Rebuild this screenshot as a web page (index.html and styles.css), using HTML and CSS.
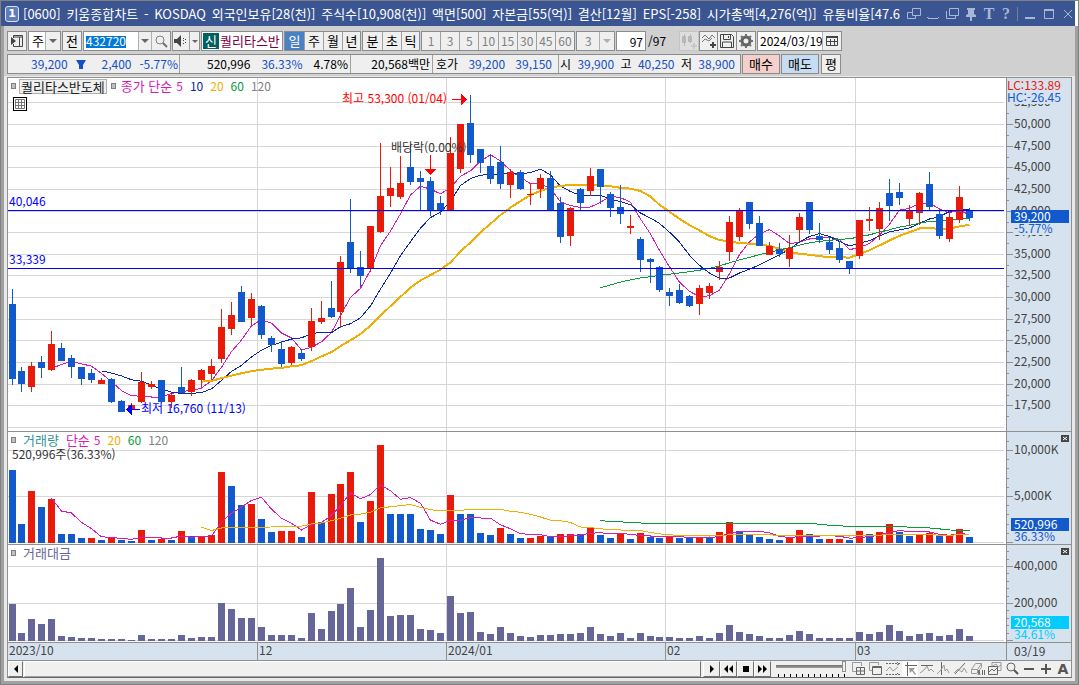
FILE: index.html
```html
<!DOCTYPE html>
<html lang="ko">
<head>
<meta charset="utf-8">
<title>[0600] 키움종합차트</title>
<link rel="stylesheet" href="styles.css">
</head>
<body>
<div class="window">
  <header class="titlebar">
    <span class="badge">1</span>
    <h1 class="title">
      <span>[0600]</span><span>키움종합차트</span><span>-</span><span>KOSDAQ</span><span>외국인보유[28(천)]</span><span>주식수[10,908(천)]</span><span>액면[500]</span><span>자본금[55(억)]</span><span>결산[12월]</span><span>EPS[-258]</span><span>시가총액[4,276(억)]</span><span>유통비율[47.6</span>
    </h1>
    <div class="winbtns">
      <button aria-label="창 복제"><svg width="14" height="14"><path d="M5.500 1.500h8v7h-8zM5.500 5.500h-5v6h8v-3"/></svg></button>
      <button aria-label="내리기"><svg width="14" height="14"><path d="M1 10.500h1.500M2 11.500h10M12 10.500h1"/></svg></button>
      <button aria-label="겹치기"><svg width="14" height="14"><path d="M4.500 1.500h9v7h-9zM1.500 4v7.500h9V9"/></svg></button>
      <button aria-label="고정"><svg width="14" height="14"><path class="fill" d="M3 1h8v2h-1v4l2 1v2H8v4H6v-4H2V8l2-1V3H3z"/></svg></button>
      <button class="glyph" aria-label="글꼴">T</button>
      <button class="glyph" aria-label="도움말">?</button>
      <i class="winsep"></i>
      <button aria-label="최소화"><svg width="14" height="14"><path class="bold" d="M2 11h10"/></svg></button>
      <button aria-label="최대화"><svg width="14" height="14"><path d="M2.500 3.500h9v8h-9z"/><path class="bold" d="M2 3h10"/></svg></button>
      <button aria-label="닫기"><svg width="14" height="14"><path d="M3 3l8 8M11 3l-8 8"/></svg></button>
    </div>
  </header>

  <div class="body">
    <div class="bars">
      <div class="bar">
        <button class="btn sq" aria-label="패널"><svg width="14" height="14"><path class="ink" d="M3.500 4V1.500h9v11h-9V10M3 3h10M9.500 3v9"/><path class="inkfill" d="M1 3l5 4-5 4z"/></svg></button>
        <select class="sel sel-kind" aria-label="종류"><option>주</option></select>
        <button class="btn sq">전</button>
        <div class="code">
          <input class="code-in" aria-label="종목코드" value="432720">
          <button class="arrow" aria-label="목록"></button>
          <button class="find" aria-label="검색"><svg width="14" height="14"><circle class="gray1" cx="6" cy="6" r="4"/><path class="gray2" d="M9 9l4 4"/></svg></button>
        </div>
        <div class="group sound">
          <button aria-label="소리"><svg width="16" height="14"><path class="inkfill" d="M1 5h3l4-4v12L4 9H1z"/><path class="ink" d="M10.500 4v1M10.500 6v1M10.500 9v1M12.500 5v1M12.500 8v1"/></svg></button>
          <button class="arrow" aria-label="소리 목록"></button>
        </div>
        <div class="stock"><b>신</b><span>퀄리타스반</span></div>
        <div class="group days"><button class="on">일</button><button>주</button><button>월</button><button>년</button></div>
        <div class="group days"><button>분</button><button>초</button><button>틱</button></div>
        <div class="group mins"><button>1</button><button>3</button><button>5</button><button>10</button><button>15</button><button>30</button><button>45</button><button>60</button></div>
        <select class="sel sel-off" aria-label="분 간격"><option>3</option></select>
        <div class="count"><input aria-label="봉 개수" value="97"><span>/97</span></div>
        <div class="tools">
          <button class="flat" aria-label="봉 추가"><svg width="18" height="18"><path class="paleFill" d="M2 4h4v7H2zM8 4h4v6H8z"/><path class="pale" d="M4.500 2v12M10.500 2v9M11 14h6M14 11v6"/></svg></button>
          <button class="btn sq" aria-label="지표 추가"><svg width="16" height="16"><path class="ink thin" d="M1 5l3-3 4 4 3-4 3 3M1 9l3-3 4 2 3-3"/><path class="ink2" d="M9 12h6M12 9v6"/></svg></button>
          <button class="btn sq" aria-label="저장"><svg width="16" height="16"><path class="ink" d="M1.500 1.500h11l2 2v11h-13zM4.500 1.500v5h7v-5M3.500 14v-5h9v5M9.500 3v2"/></svg></button>
          <button class="btn sq" aria-label="설정"><svg width="16" height="16"><circle class="gray3" cx="8" cy="8" r="4"/><path class="gray2" d="M8 1v3M8 12v3M1 8h3M12 8h3M3 3l2 2M11 11l2 2M13 3l-2 2M3 13l2-2"/></svg></button>
        </div>
        <div class="code date">
          <input aria-label="날짜" value="2024/03/19">
          <button class="find" aria-label="달력"><svg width="14" height="14"><path class="ink" d="M1.500 3.500h11v8h-11zM5.500 5v7M9.500 5v7M1 7.500h12"/><path class="ink2" d="M1 3h12"/></svg></button>
        </div>
      </div>
      <div class="bar">
        <div class="quote">
          <div class="cell c1"><span>39,200</span><svg width="10" height="9"><path d="M0 0h10L7 5v4H3V5z"/></svg><span class="n2">2,400</span><span>-5.77%</span></div>
          <div class="cell c2"><span class="k">520,996</span><span>36.33%</span><span class="k">4.78%</span></div>
          <div class="cell c3"><span class="k">20,568백만</span></div>
          <div class="cell c4"><span class="k">호가</span><span>39,200</span><span>39,150</span></div>
          <div class="cell c5"><span class="k">시</span><span>39,900</span><span class="k">고</span><span>40,250</span><span class="k">저</span><span>38,900</span></div>
        </div>
        <button class="btn buy">매수</button>
        <button class="btn sell">매도</button>
        <button class="btn avg">평</button>
      </div>
    </div>

    <main class="panel">
      <section class="pane">
        <svg class="plot price" id="price"></svg>
        <svg class="axis price" id="priceAxis"></svg>
        <div class="legend">
          <i></i><button class="name">퀄리타스반도체</button><i></i>
          <span class="m5 ko">종가 단순</span><span class="m5">5</span><span class="m10">10</span><span class="m20">20</span><span class="m60">60</span><span class="m120">120</span>
        </div>
        <button class="gridbtn" aria-label="표 보기"><svg width="10" height="10"><path d="M.5.5h9v9h-9zM0 3.500h10M0 6.500h10M3.500 0v10M6.500 0v10"/></svg></button>
      </section>
      <section class="pane">
        <svg class="plot vol" id="vol"></svg>
        <svg class="axis vol" id="volAxis"></svg>
        <div class="legend">
          <i></i><span class="teal ko">거래량</span><span class="m5 ko">단순</span><span class="m5">5</span><span class="m20">20</span><span class="m60">60</span><span class="m120">120</span>
        </div>
        <p class="note">520,996주(36.33%)</p>
        <button class="close" aria-label="닫기"><svg width="8" height="7"><path d="M2 2l4 3M6 2l-4 3"/></svg></button>
      </section>
      <section class="pane">
        <svg class="plot amt" id="amt"></svg>
        <svg class="axis amt" id="amtAxis"></svg>
        <div class="legend"><i></i><span class="violet ko">거래대금</span></div>
        <button class="close" aria-label="닫기"><svg width="8" height="7"><path d="M2 2l4 3M6 2l-4 3"/></svg></button>
      </section>
      <section class="pane time">
        <svg class="plot" id="time"></svg>
        <span class="axis last">03/19</span>
      </section>
      <footer class="nav">
        <button class="raised" aria-label="이전"><svg width="6" height="8"><path d="M5 0v8L1 4z"/></svg></button>
        <div class="track"></div>
        <div class="play">
          <button class="raised" aria-label="재생"><svg width="8" height="8"><path d="M2 0v8l4-4z"/></svg></button>
          <button class="raised" aria-label="뒤로"><svg width="9" height="8"><path d="M4 0v8L0 4zM9 0v8L5 4z"/></svg></button>
          <button class="raised" aria-label="정지"><svg width="6" height="8"><path d="M0 1h6v6H0z"/></svg></button>
          <button class="raised" aria-label="앞으로"><svg width="9" height="8"><path d="M0 0v8l4-4zM5 0v8l4-4z"/></svg></button>
        </div>
        <input class="speed" type="range" min="0" max="11" value="11" aria-label="속도">
        <div class="icons">
          <button aria-label="새 창"><svg width="16" height="16"><path class="g" d="M5 10.500H1.500v-9h9V5"/><path class="d" d="M5.500 6.500h8v7h-8zM5 10h9M9.500 6v8"/></svg></button>
          <button aria-label="창 복사"><svg width="16" height="16"><path class="g" d="M5 9.500H1.500v-8h9V4"/><path class="d" d="M4.500 5.500h9v8h-9zM4 6.500h10"/></svg></button>
          <button aria-label="범위"><svg width="16" height="16"><path class="d dash" d="M1 2.500h14M1 13.500h14"/><path class="g" d="M1 10l4-4 3 4 5-4"/><path class="d" d="M12 1l2 2-2 1M12 12l2 2"/></svg></button>
          <button class="on" aria-label="십자선"><svg width="16" height="16"><path class="d" d="M3 4.500h12M5.500 1v14"/><path class="f" d="M7 7h6l-2 2 3 4-1 1-3-4-2 2z"/></svg></button>
          <button aria-label="수평선"><svg width="16" height="16"><path class="d" d="M2 4.500h12"/><path class="g" d="M1 12l4-3 3-4 2 5 2-2 3 3"/></svg></button>
          <button aria-label="수직선"><svg width="16" height="16"><path class="d" d="M5.500 1v13"/><path class="g" d="M1 13l4-4 3-5 1 6 2-2 2 4"/></svg></button>
          <button aria-label="추세선"><svg width="16" height="16"><path class="d" d="M2 13L12 2"/><path class="g" d="M1 12l4-4 4 3 2-4 3 5"/></svg></button>
          <button aria-label="지우개"><svg width="16" height="16"><path class="g" d="M1.500 8.500l4-6h6l-4 6zM1.500 8.500v4h5l5-6v-4M7.500 8.500v3"/><path class="d" d="M8 14l1-5 1 5M12.500 9v5M14.500 9v5"/></svg></button>
          <button aria-label="그림 저장"><svg width="16" height="16"><path class="g" d="M5 5V1.500h9v8h-3M6 5l3-2 2 3 3-2"/><path class="d" d="M1.500 5.500h9v8h-9zM2 11l3-3 2 2 3-3"/></svg></button>
          <button aria-label="돋보기"><svg width="16" height="16"><circle class="d" cx="7" cy="6" r="4"/><path class="t" d="M10 9l4 4"/></svg></button>
          <button aria-label="축소"><svg width="16" height="16"><path class="t" d="M3 8h10"/></svg></button>
          <button aria-label="확대"><svg width="16" height="16"><path class="t" d="M3 8h10M8 3v10"/></svg></button>
          <button class="letter" aria-label="자동">A</button>
        </div>
      </footer>
    </main>
  </div>
</div>
<script src="chart.js"></script>
</body>
</html>
```
FILE: styles.css
```css
* { box-sizing: border-box; }
body, h1, p { margin: 0; }
body, button, input, select {
  font-family: "Noto Sans CJK KR", sans-serif;
  font-size: 12px;
  line-height: 16px;
  color: #000;
}
button { padding: 0; border: 0; background: none; }
button svg { display: block; margin: auto; }
svg path, svg circle { fill: none; }

.window {
  min-height: 100vh;
  display: flex;
  flex-direction: column;
  border: 1px solid #808080;
}

.titlebar {
  display: flex;
  align-items: center;
  height: 25px;
  margin-right: 3px;
  padding: 0 0 0 4px;
  background: #3a5591;
  color: #fff;
}
.badge {
  width: 14px;
  height: 16px;
  border: 1px solid #dbe3f3;
  border-radius: 3px;
  background: #5f7db8;
  font: bold 11px/14px "DejaVu Sans", sans-serif;
  text-align: center;
}
.title {
  flex: 1;
  display: flex;
  justify-content: space-between;
  padding: 0 7px 0 4px;
  font-size: 13px;
  font-weight: 400;
  line-height: 20px;
  white-space: nowrap;
}
.winbtns { display: flex; align-items: center; gap: 5px; }
.winbtns button { width: 14px; height: 14px; }
.winbtns path { stroke: #a9b7d6; }
.winbtns .fill { fill: #a9b7d6; stroke: none; }
.winbtns .bold { stroke-width: 2; }
.winbtns .glyph { width: 12px; font: bold 16px/14px "Liberation Serif", serif; color: #a9b7d6; }
.winsep { width: 1px; height: 14px; background: #7c7c8c; }

.body {
  flex: 1;
  border: 3px solid #a0a0a0;
  border-top: 0;
  background: #e8e8e8;
}
.bars {
  display: flex;
  flex-direction: column;
  gap: 3px;
  padding: 5px 3px 2px;
  background: #d0d0d0;
}
.bar { display: flex; gap: 1px; height: 20px; }

.btn, .group, .code, .stock, .sel, .count input {
  border: 1px solid #8c8c8c;
  background: #efefef;
}
.sq { width: 20px; font-size: 13px; }
.sel {
  appearance: none;
  padding: 0 0 0 3px;
  border-radius: 0;
  font-size: 13px;
  background: #fff url("data:image/svg+xml,%3Csvg xmlns='http://www.w3.org/2000/svg' width='15' height='18'%3E%3Cpath d='M0 0h15v18H0z' fill='%23efefef'/%3E%3Cpath d='M0 0h1v18H0z' fill='%23b0b0b0'/%3E%3Cpath d='M4 7h8l-4 4z' fill='%23666'/%3E%3C/svg%3E") right center no-repeat;
}
.sel-kind { width: 33px; }
.sel-off {
  width: 39px;
  padding-left: 8px;
  font-size: 12px;
  color: #808080;
  background-color: #efefef;
  background-image: url("data:image/svg+xml,%3Csvg xmlns='http://www.w3.org/2000/svg' width='15' height='18'%3E%3Cpath d='M0 0h15v18H0z' fill='%23efefef'/%3E%3Cpath d='M0 0h1v18H0z' fill='%23b0b0b0'/%3E%3Cpath d='M4 7h8l-4 4z' fill='%23b0b0b0'/%3E%3C/svg%3E");
}
.code { display: flex; background: #fff; }
.code input {
  width: 54px;
  padding: 0 0 0 2px;
  border: 0;
  background: none;
}
.code .code-in {
  color: #fff;
  background: linear-gradient(#0078d7, #0078d7) 2px 4px / 40px 12px no-repeat;
}
.arrow { width: 13px; background: #efefef; border-left: 1px solid #b0b0b0; }
.arrow::before {
  content: "";
  display: block;
  width: 0;
  margin: auto;
  border: 4px solid transparent;
  border-top-color: #666;
  border-bottom: 0;
}
.find { border-left: 1px solid #b0b0b0; background: #efefef; }
.code .find { width: 19px; }
.group { display: flex; }
.group button { flex: 1; font-size: 13px; }
.group button + button { border-left: 1px solid #a0a0a0; }
.sound { width: 28px; }
.sound button:first-child { flex: 0 0 16px; }
.sound .arrow { flex: 0 0 10px; }
.sound .arrow::before { border-width: 3px; border-bottom: 0; }
.stock {
  display: flex;
  align-items: center;
  width: 82px;
  padding: 1px;
  overflow: hidden;
  background: #fff;
  font-size: 13px;
  white-space: nowrap;
  color: #800040;
}
.stock b {
  flex: 0 0 16px;
  margin-right: 1px;
  background: #006060;
  color: #fff;
  font-weight: 400;
  text-align: center;
}
.days button { flex: 0 0 19px; }
.days button:last-child { flex-basis: 18px; }
.days .on { background: #4a80c4; color: #fff; }
.mins { width: 154px; }
.mins button { font-size: 12px; color: #808080; }
.count { display: flex; align-items: center; gap: 2px; }
.count input { width: 30px; height: 20px; padding: 0 2px; text-align: right; background: #fff; }
.tools { display: flex; margin-left: auto; }
.tools .sq { width: 19px; }
.flat { width: 20px; background: #dedede; border: 1px solid #c4c4c4; }
.tools button + button { border-left-width: 0; }
.tools .flat + button { border-left-width: 1px; }
.date { width: 85px; margin-right: 230px; }
.date input { width: 64px; }
.ink, .ink2, .gray1, .gray2, .gray3 { stroke: #444; }
.ink2 { stroke-width: 2; }
.thin { stroke: #777; }
.gray1 { stroke: #808080; }
.gray2 { stroke: #707070; stroke-width: 2; }
.gray3 { stroke: #606060; stroke-width: 3; }
.pale { stroke: #b8b8b8; }
svg .inkfill { fill: #444; }
svg .paleFill { fill: #b8b8b8; }

.quote {
  display: flex;
  border: 1px solid #8c8c8c;
  background: #efefef;
  color: #1450c8;
}
.cell { display: flex; align-items: center; justify-content: space-between; white-space: nowrap; }
.cell + .cell { border-left: 1px solid #a0a0a0; }
.k { color: #000; }
.c1 { width: 171px; padding: 0 1px 0 23px; }
.c1 path { fill: #1450c8; }
.c1 .n2 { margin-left: 8px; }
.c2 { width: 171px; padding: 0 2px 0 27px; }
.c3 { width: 82px; padding: 0 2px; justify-content: flex-end; }
.c4 { width: 126px; padding: 0 6px 0 3px; }
.c5 { width: 182px; padding: 0 5px 0 1px; }
.buy, .sell { width: 38px; font-size: 13px; }
.buy { background: #f5cfca; }
.sell { background: #c6dcf3; }
.avg { width: 20px; margin-left: 1px; font-size: 13px; }

.panel { margin: 1px 3px 0; border: 1px solid #909090; border-bottom-color: #686868; }
.pane {
  position: relative;
  display: flex;
  border-bottom: 1px solid #909090;
  background: #fff;
}
.plot { flex: 1; min-width: 0; display: block; }
.axis { flex: 0 0 65px; width: 65px; min-width: 0; border-left: 1px solid #909090; background: #d7e2ef; display: block; }
.price { height: 353px; }
.vol { height: 112px; }
.amt { height: 97px; }
.plot, .axis { shape-rendering: crispEdges; overflow: hidden; }
.time .plot, .price.axis { overflow: visible; }
.plot text, .axis text { font-size: 12px; }
.time .plot, .time .axis { height: 17px; background: #d7e2ef; }
.last { padding-left: 7px; color: #444; line-height: 16px; }

.legend {
  position: absolute;
  top: 0;
  left: 3px;
  display: flex;
  align-items: center;
  gap: 7px;
  height: 16px;
  white-space: nowrap;
}
.legend i { width: 5px; height: 6px; border: 1px solid #808080; background: #c0c0c0; }
.legend .name {
  height: 15px;
  margin: 0 -3px 0 -4px;
  padding: 0 1px;
  border: 1px solid #b0b0b0;
  background: #efefef;
  font-size: 13px;
  line-height: 13px;
  color: #222;
}
.legend .ko { font-size: 13px; }
.legend i + .ko.m5 { margin-left: -2px; }
.m5 { color: #d61cb4; }
.ko + .m5:not(.ko) { margin-left: -3px; }
.m10 { color: #0a28a8; }
.m20 { color: #f0ae00; }
.m60 { color: #0a9a3c; }
.m120 { color: #808080; }
.teal { color: #2e9494; }
.violet { color: #666699; }
.gridbtn {
  position: absolute;
  top: 19px;
  left: 5px;
  width: 14px;
  height: 14px;
  border: 1px solid #000;
  background: #fff;
}
.gridbtn path { stroke: #777; }
.note { position: absolute; top: 14px; left: 4px; color: #333; }
.close { position: absolute; top: 3px; right: 2px; width: 8px; height: 7px; background: #444; }
.close path { stroke: #fff; }

.nav { display: flex; height: 16px; background: #f0f0f0; }
.raised {
  width: 15px;
  height: 16px;
  border: 1px solid #fff;
  border-right-color: #707070;
  border-bottom-color: #707070;
  background: #efefef;
}
.raised path { fill: #000; }
.track { flex: 1; margin: 0 2px 0 1px; border: 1px solid #fff; border-right-color: #707070; border-bottom-color: #a0a0a0; }
.play { display: flex; }
.play .raised { width: 17px; }
.speed {
  appearance: none;
  width: 70px;
  height: 16px;
  margin: 0 5px;
  background:
    linear-gradient(#707070, #a0a0a0) 0 4px / 100% 3px no-repeat,
    repeating-linear-gradient(90deg, #000 0 1px, transparent 1px 6px) 2px 13px / 67px 3px no-repeat;
}
.speed::-webkit-slider-thumb {
  appearance: none;
  width: 4px;
  height: 11px;
  margin-top: -5px;
  border: 1px solid #909090;
  background: #efefef;
}
.icons { display: flex; gap: 1px; }
.icons button { width: 16px; height: 16px; }
.icons .on { background: #fff; }
.icons .g { stroke: #9a9a9a; }
.icons .d { stroke: #666; }
.icons .t { stroke: #555; stroke-width: 2; }
.icons .f { fill: #999; }
.icons .dash { stroke-dasharray: 2 1; }
.icons .letter { font: bold 14px/16px "DejaVu Sans", sans-serif; color: #555; }
```
FILE: chart.js
```js
const RED = '#e81a0a', BLUE = '#125acb', GRID = '#d6d6d6', TICK = '#909090';
const PITCH = 319 / 32;
const MONTHS = [[249, '12'], [438, '2024/01'], [657, '02'], [847, '03']];

// direction, high, body top, body bottom, low
const candles = `B289 304 379 385,B367 371 384 392,R362 366 387 392,B356 362 368 378,R331 344 370 371,
B343 348 361 361,B355 358 367 378,B367 367 379 385,B369 373 380 383,R378 380 384 384,
B378 379 402 403,B400 401 412 412,R403 405 409 409,R372 382 402 403,R381 384 387 389,
B380 380 402 403,R393 395 402 408,B367 387 393 393,R379 380 392 396,R369 370 380 387,
R359 366 374 380,R309 327 359 363,R302 315 329 335,B286 292 322 322,R293 299 318 326,
B305 306 335 339,B336 338 345 352,B341 349 364 367,R346 347 363 365,B349 353 359 361,
R308 321 347 351,R301 318 322 324,B281 308 317 318,R256 262 312 328,B199 242 269 273,
B251 267 276 287,R226 226 269 272,R143 196 232 233,R167 188 196 207,R156 183 197 199,
B145 167 182 185,B171 178 182 210,B177 181 211 216,B196 203 211 215,R137 153 211 211,
R124 124 169 173,B95 123 155 163,B149 149 163 173,B154 166 179 184,B146 162 184 189,
R169 172 185 198,B170 172 189 190,R184 194 195 205,R174 178 189 198,B171 178 211 211,
B197 203 237 243,R207 208 236 246,B188 189 203 210,R168 176 191 196,B169 169 187 204,
B192 194 208 217,B185 207 214 224,R215 226 228 234,B237 239 260 272,B258 259 262 283,
B266 267 290 292,B288 292 296 306,B284 290 303 304,B295 296 306 307,R285 288 304 315,
R283 286 293 299,R261 267 272 280,R216 222 252 261,R208 210 237 241,B202 202 224 229,
B216 223 246 246,R242 246 255 255,B243 249 254 257,R235 248 259 267,R213 217 230 242,
B202 202 230 234,B223 236 240 243,B237 242 250 254,B241 248 260 263,B261 261 268 274,
R220 220 256 259,R207 219 221 231,R202 208 229 240,B179 193 206 221,B183 192 198 205,
R205 211 219 226,R192 193 213 225,B172 184 207 210,B210 214 236 239,R211 217 239 242,
R186 197 220 223,B208 211 218 221`.split(',').map(s => {
  s = s.trim();
  return { up: s[0] === 'R', v: s.slice(1).split(' ').map(n => n - 78) };
});

const volumes = `B73 B19 R52 B36 R44 B9 B9 B5 R5 B3 R6 B3 B2 R13 B3 R4 B3 R12 B7 R6 R8 R71 B57 B38 R39 B24 B11 R12 R12 B6
R51 B21 R49 R59 R71 B21 R42 R98 B29 B29 B29 B14 B13 B9 R48 B29 B29 B10 B8 R15 B9 B5 R5 R7 B6 R9 R9 B9 R16 B8
B5 R10 B4 R10 B6 B5 R6 B5 B5 R6 B5 R11 R21 B12 B8 B6 B4 B3 R6 R13 B9 B4 R4 R4 B3 R12 B9 R11 R19 B11
B7 R8 R10 B7 R7 R14 B6`.split(/\s+/).map(s => ({ up: s[0] === 'R', h: +s.slice(1) }));

const amounts = `37 8 22 17 22 5 4 3 3 2 2 2 1 6 2 2 2 6 3 4 4 38 32 23 23 14 6 6 6 3 28 12 30 37 53 14 31 83 25 26
26 12 11 8 45 28 29 9 7 14 8 5 4 6 6 7 7 8 14 7 5 8 3 8 5 4 4 3 3 5 3 8 16 9 7 5 3 3 6 10
7 3 3 3 3 9 7 9 16 10 5 7 8 5 6 12 5`.split(/\s+/).map(Number);

const left = i => Math.floor(1 + i * PITCH);
const rect = (x, y, w, h, fill) => `<rect x="${x}" y="${y}" width="${w}" height="${h}" fill="${fill}"/>`;
const text = (x, y, s, fill, anchor = 'start') => `<text x="${x}" y="${y}" fill="${fill}" text-anchor="${anchor}">${s}</text>`;
const shape = (d, fill) => `<path d="${d}" style="fill:${fill}"/>`;
const put = (id, html) => { document.getElementById(id).innerHTML = html; };

function average(values, n, color, width = 1) {
  const pts = [];
  for (let i = n - 1; i < values.length; i++) {
    const sum = values.slice(i - n + 1, i + 1).reduce((a, b) => a + b, 0);
    pts.push(`${left(i) + 3.5},${(sum / n).toFixed(1)}`);
  }
  return `<polyline points="${pts.join(' ')}" fill="none" stroke="${color}" stroke-width="${width}"/>`;
}

function grid(rows, height) {
  return rows.map(y => rect(0, y, '99.8%', 1, GRID)).join('') +
    MONTHS.map(m => rect(m[0], 0, 1, height, GRID)).join('');
}

// price
const closes = candles.map(c => c.up ? c.v[1] : c.v[2]);
const priceRows = Array.from({ length: 16 }, (_, k) => Math.round(24.4 + 21.63 * k));
put('price', grid(priceRows, 353) +
  average(closes, 5, '#d61cb4') + average(closes, 10, '#0a28a8') +
  average(closes, 20, '#f0ae00', 2) + average(closes, 60, '#0a9a3c') +
  candles.map((c, i) => {
    const [hi, top, bottom, lo] = c.v, color = c.up ? RED : BLUE;
    return rect(left(i) + 3, hi, 1, lo - hi, color) + rect(left(i), top, 7, bottom - top, color);
  }).join('') +
  rect(0, 132, '99.8%', 1, '#00f') + rect(0, 190, '99.8%', 1, '#00f') +
  text(1, 128, '40,046', '#00f') + text(1, 186, '33,339', '#00f') +
  text(439, 25, '최고 53,300 (01/04)', '#f00', 'end') + rect(444, 21, 10, 1, '#f00') + shape('M453 16v11l6-5.500z', '#f00') +
  text(383, 74, '배당락(0.00%)', '#333') + rect(422, 77, 1, 15, '#f00') + shape('M417 91h11l-5.500 6z', '#f00') +
  text(133, 335, '최저 16,760 (11/13)', '#00f') + rect(122, 331, 10, 1, '#00f') + shape('M124 326v11l-6-5.500z', '#00f'));

const labels = ['52,500', '50,000', '47,500', '45,000', '42,500', '40,000', '37,500', '35,000', '32,500', '30,000', '27,500', '25,000', '22,500', '20,000', '17,500'];
put('priceAxis', labels.map((s, k) => rect(0, priceRows[k], 6, 1, TICK) + rect(0, priceRows[k] + 11, 2, 1, TICK) +
    text(7, priceRows[k] + 4, s, '#444')).join('') +
  rect(0, 0, 64, 26, '#d7e2ef') + rect(7, 145, 57, 12, '#d7e2ef') +
  text(0, 12, 'LC:133.89', RED) + text(0, 24, 'HC:-26.45', BLUE) +
  rect(4, 132, 58, 13, BLUE) + text(7, 143, '39,200', '#fff') + text(7, 155, '-5.77%', BLUE));

// volume
const volTops = volumes.map(v => 111 - v.h);
put('vol', grid([18, 64, 110], 112) +
  volumes.map((v, i) => rect(left(i), 111 - v.h, 7, v.h, v.up ? RED : BLUE)).join('') +
  average(volTops, 5, '#d61cb4') + average(volTops, 20, '#f0ae00') + average(volTops, 60, '#0a9a3c'));
put('volAxis', Array.from({ length: 12 }, (_, k) => rect(0, 110 - Math.round(9.2 * k), k % 5 ? 2 : 6, 1, TICK)).join('') +
  text(7, 22, '10,000K', '#444') + text(7, 68, '5,000K', '#444') +
  rect(4, 86, 58, 13, BLUE) + text(7, 97, '520,996', '#fff') + text(7, 109, '36.33%', BLUE));

// traded amount
put('amt', grid([21, 58, 95], 97) + amounts.map((h, i) => rect(left(i), 96 - h, 7, h, '#666699')).join(''));
put('amtAxis', Array.from({ length: 13 }, (_, k) => rect(0, 95 - Math.round(7.4 * k), k % 5 ? 2 : 6, 1, TICK)).join('') +
  text(7, 25, '400,000', '#444') + text(7, 62, '200,000', '#444') +
  rect(4, 71, 58, 13, '#00ccff') + text(7, 82, '20,568', '#fff') + text(7, 94, '34.61%', '#00ccff'));

put('time', text(1, 12, '2023/10', '#444') +
  MONTHS.map(m => rect(m[0], 0, 1, 17, TICK) + text(m[0] + 2, 12, m[1], '#444')).join(''));
```
